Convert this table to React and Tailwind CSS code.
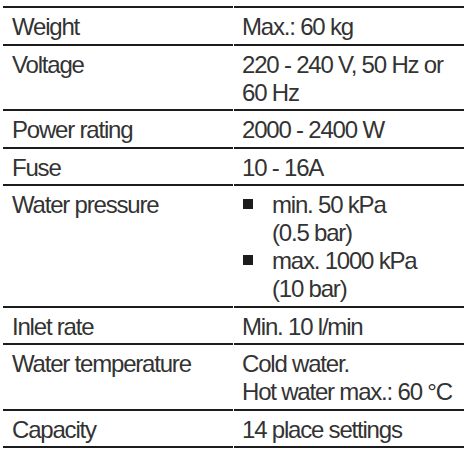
const rows = [
  { label: "Weight", value: ["Max.: 60 kg"] },
  { label: "Voltage", value: ["220 - 240 V, 50 Hz or", "60 Hz"] },
  { label: "Power rating", value: ["2000 - 2400 W"] },
  { label: "Fuse", value: ["10 - 16A"] },
  { label: "Water pressure", bullets: [["min. 50 kPa", "(0.5 bar)"], ["max. 1000 kPa", "(10 bar)"]] },
  { label: "Inlet rate", value: ["Min. 10 l/min"] },
  { label: "Water temperature", value: ["Cold water.", "Hot water max.: 60 °C"] },
  { label: "Capacity", value: ["14 place settings"] },
];

function Cell({ children, first, className = "" }) {
  return (
    <div
      className={`border-b-2 border-[#1c1c1c] pt-[5px] pb-[2.5px] ${first ? "border-t-2" : ""} ${className}`}
    >
      {children}
    </div>
  );
}

export default function App() {
  return (
    <div
      className="w-[467px] h-[452px] bg-white pt-[6px] pl-[3px] text-[#333333] text-[24px] leading-[28px] tracking-[-1.2px] whitespace-nowrap"
      style={{ fontFamily: '"Liberation Sans", Arial, sans-serif' }}
    >
      <div className="grid grid-cols-[230px_230px] gap-x-px">
        {rows.map((r, i) => (
          <div key={r.label} className="contents">
            <Cell first={i === 0} className="pl-[9px]">{r.label}</Cell>
            <Cell first={i === 0} className="pl-[8px]">
              {r.value && r.value.map((v) => <div key={v}>{v}</div>)}
              {r.bullets &&
                r.bullets.map((b) => (
                  <div key={b[0]} className="flex">
                    <div className="w-[30px] shrink-0 pt-[8px] pl-[1px]">
                      <div className="w-[10px] h-[10px] bg-[#1c1c1c]" />
                    </div>
                    <div>
                      {b.map((t) => <div key={t}>{t}</div>)}
                    </div>
                  </div>
                ))}
            </Cell>
          </div>
        ))}
      </div>
    </div>
  );
}
